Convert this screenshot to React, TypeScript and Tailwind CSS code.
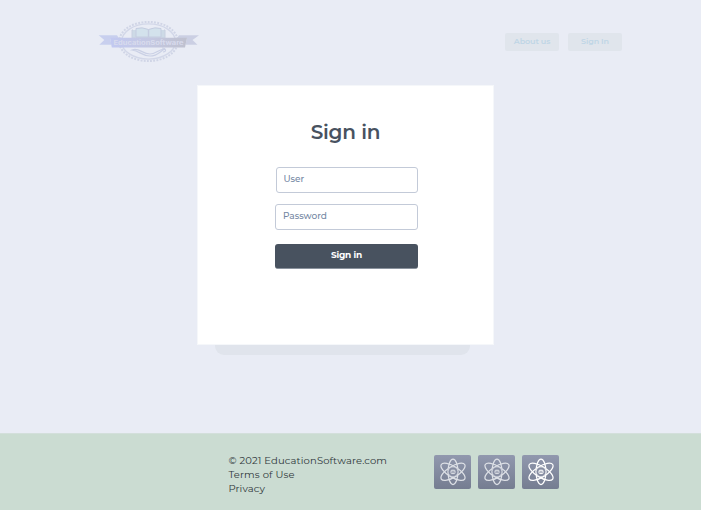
import React from "react";

function Logo() {
  return (
    <svg width="102" height="44" viewBox="8 8 102 44" fill="none" aria-label="EducationSoftware">
      <defs>
        <linearGradient id="ribbon" x1="0" x2="1" y1="0" y2="0">
          <stop offset="0" stopColor="#c2c9f1" />
          <stop offset="0.5" stopColor="#c4c8e2" />
          <stop offset="1" stopColor="#bfc1cf" />
        </linearGradient>
      </defs>
      <ellipse cx="58.5" cy="29.5" rx="29.3" ry="19.6" stroke="#d0d5e6" strokeWidth="2" strokeDasharray="1.9 1.3" />
      <ellipse cx="58.5" cy="29.5" rx="27" ry="17.6" stroke="#d2d7e8" strokeWidth="1.4" />
      <path d="M43 18h-1v8h33v-8h-1" fill="#cddae6" stroke="#c8d0e0" />
      <path d="M46 16.5q6-1.8 12.5 1 6.500-2.800 12.500-1v8.500H46Z" fill="#d3e2ec" stroke="#c4cce0" />
      <path d="M58.500 17.500v8" stroke="#c4cce0" strokeWidth="1.5" />
      <path d="M8.700 23.200H27l2 3H20l1.500 6.600H9.300l5-4.800Z" fill="#c8cfee" />
      <path d="M109 23.200H89l-2 3h10l-1.500 6.600h12l-5-4.800Z" fill="#cbcfe3" />
      <path d="M42 38c7-3 10 4 18 4 6 0 8-5 15-5-5 2-7 7-15 7s-10-5-18-6ZM72 36c4 0 5 4 1 4" stroke="#cad0e5" strokeWidth="1.200" />
      <path d="M20 25.700h77L95 35.400H21.800Z" fill="url(#ribbon)" />
      <text x="58.500" y="32.600" textAnchor="middle" textLength="70" lengthAdjust="spacingAndGlyphs" fill="#d8dbed" fontSize="5.500" fontWeight="700" fontFamily="Inter, sans-serif">EducationSoftware</text>
    </svg>
  );
}

function AtomTile({ bright = false }: { bright?: boolean }) {
  const color = bright ? "#ffffff" : "#dde0e6";
  return (
    <a href="#" className="block h-[34px] w-[37px] rounded-[2px] bg-linear-to-b from-[#9198ae] to-[#757d91]">
      <svg width="37" height="34" viewBox="0 0 37 34" fill="none" stroke={color} strokeWidth="1.25">
        <ellipse cx="19" cy="16.8" rx="4.9" ry="12.7" />
        <ellipse cx="19" cy="16.8" rx="5.4" ry="13.8" transform="rotate(58 19 16.8)" />
        <ellipse cx="19" cy="16.8" rx="5.4" ry="13.8" transform="rotate(-58 19 16.8)" />
        <circle cx="19" cy="16.8" r="4.9" fill="#858ca1" strokeWidth="0.7" />
        <rect x="17" y="15.2" width="4" height="3.4" rx="0.7" strokeWidth="1" />
        <path d="M17 16h4M19 17v1.500" strokeWidth="0.8" />
      </svg>
    </a>
  );
}

export default function App() {
  return (
    <div className="flex h-[510px] w-full flex-col overflow-hidden bg-[#e9ecf5] font-['Montserrat','Inter',sans-serif]">
      <header className="flex h-[85px] shrink-0 items-start justify-between pl-[98px] pr-[79px]">
        <div className="pt-5"><Logo /></div>
        <nav className="flex gap-[9px] pt-[33px] text-[8px] font-semibold text-[#bfd6e6]">
          <a href="#" className="flex h-[18px] w-[54px] items-center justify-center rounded-[2px] bg-[#e0e5ec] pb-[2px] tracking-[-0.1px]">About us</a>
          <a href="#" className="flex h-[18px] w-[54px] items-center justify-center rounded-[2px] bg-[#e0e5ec] pb-[2px] tracking-[-0.1px]">Sign In</a>
        </nav>
      </header>
      <main className="h-[348px] shrink-0 pl-[197px]">
        <form className="flex h-[260px] w-[297px] flex-col border border-[#f5f7fa] bg-white pl-[77px]" onSubmit={(e) => e.preventDefault()}>
          <h1 className="mt-[32px] w-[141px] text-center text-[20px] leading-7 font-semibold tracking-[-0.3px] whitespace-nowrap text-[#48525f] [word-spacing:0.5px]">Sign in</h1>
          <input aria-label="User" placeholder="User" className="mt-[21px] ml-px h-[26px] w-[142px] rounded-[3px] border border-[#c3cad8] px-[6.5px] pb-[3px] text-[9px] font-medium tracking-[-0.05px] placeholder:text-[#7487a3]" />
          <input aria-label="Password" type="password" placeholder="Password" className="mt-[11px] h-[26px] w-[143px] rounded-[3px] border border-[#c3cad8] px-[7px] pb-[3px] text-[9px] font-medium tracking-[-0.02px] placeholder:text-[#7487a3]" />
          <button className="mt-[14px] h-[25px] w-[143px] rounded-[3px] border-b border-[#8a929d] bg-[#48525f] pb-[2px] text-[9px] font-bold tracking-[-0.2px] text-white">Sign in</button>
        </form>
        <div className="ml-[18px] h-[10px] w-[255px] rounded-b-[9px] bg-[#e0e4ec]" />
      </main>
      <footer className="flex h-[77px] shrink-0 border-t border-[#d3dfdb] bg-[#cbdcd2] pl-[228.5px]">
        <div className="flex w-[205.5px] flex-col pt-[20px] text-[10px] leading-[14px] whitespace-nowrap text-[#2f373b]">
          <p className="tracking-[0.13px]">© 2021 EducationSoftware.com</p>
          <a href="#" className="tracking-[0.15px]">Terms of Use</a>
          <a href="#" className="tracking-[0.1px]">Privacy</a>
        </div>
        <div className="flex gap-[7px] pt-[21px]">
          <AtomTile />
          <AtomTile />
          <AtomTile bright />
        </div>
      </footer>
    </div>
  );
}
